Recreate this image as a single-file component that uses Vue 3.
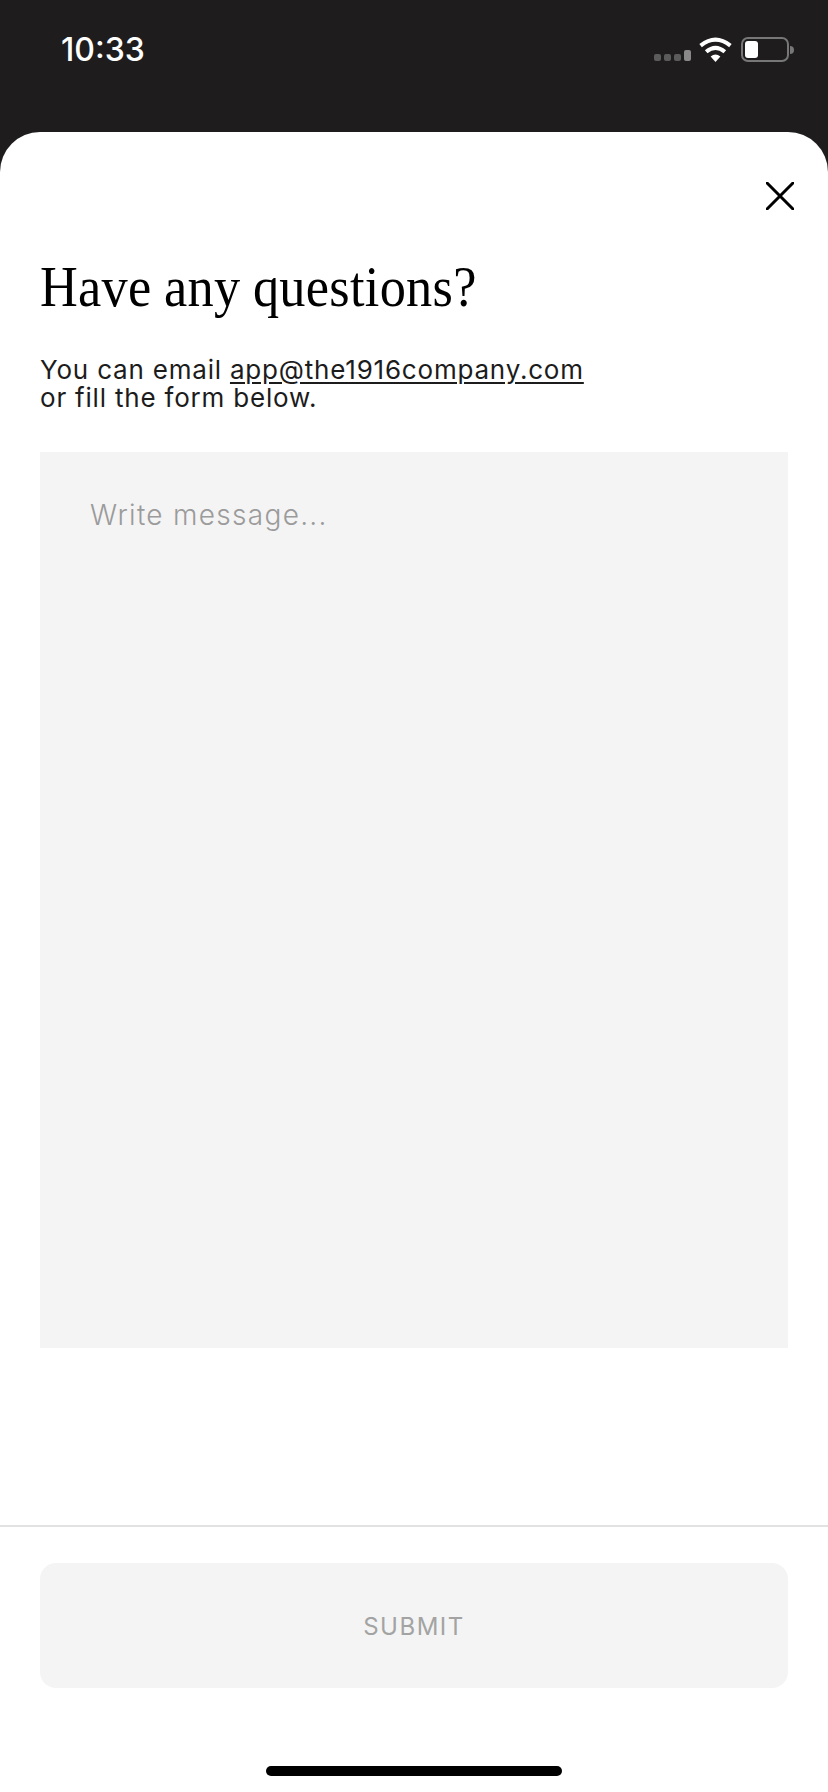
<script setup>
const email = 'app@the1916company.com'
</script>

<template>
  <div class="screen">
    <header class="status">
      <span class="time">10:33</span>
      <div class="status-icons">
        <div class="signal">
          <i></i><i></i><i></i><i class="tall"></i>
        </div>
        <svg class="wifi" width="33" height="25" viewBox="0 0 33 25">
          <path d="M16.5 25 L11.6 19.6 Q16.5 15.6 21.4 19.6 Z" fill="#fff" />
          <path d="M7.2 14.8 Q16.5 6.8 25.8 14.8" fill="none" stroke="#fff" stroke-width="4" />
          <path d="M1.6 8.6 Q16.5 -3.4 31.4 8.6" fill="none" stroke="#fff" stroke-width="4" />
        </svg>
        <div class="battery">
          <div class="battery-body"><div class="battery-fill"></div></div>
          <div class="battery-nub"></div>
        </div>
      </div>
    </header>

    <main class="sheet">
      <div class="close-row">
        <svg class="close" width="28" height="28" viewBox="0 0 28 28">
          <path d="M1 1 L27 27 M27 1 L1 27" stroke="#000" stroke-width="3" stroke-linecap="round" />
        </svg>
      </div>

      <div class="content">
        <h1 class="title">Have any questions?</h1>
        <p class="intro">
          You can email <a class="mail">{{ email }}</a><br />
          or fill the form below.
        </p>
        <div class="message">Write message...</div>
      </div>

      <footer class="actions">
        <button class="submit">SUBMIT</button>
        <div class="home-bar"></div>
      </footer>
    </main>
  </div>
</template>

<style>
html,
body {
  margin: 0;
  background: #1e1c1d;
}
</style>

<style scoped>
.screen {
  width: 828px;
  height: 1792px;
  display: flex;
  flex-direction: column;
  background: #1e1c1d;
  overflow: hidden;
}

.status {
  height: 132px;
  box-sizing: border-box;
  padding: 31px 34px 0 61px;
  display: flex;
  justify-content: space-between;
  align-items: flex-start;
}

.time {
  color: #fff;
  font-family: Inter, sans-serif;
  font-size: 32px;
  font-weight: 500;
  line-height: 38px;
  letter-spacing: 0;
}

.status-icons {
  display: flex;
  align-items: flex-start;
  padding-top: 6px;
}

.signal {
  display: flex;
  align-items: flex-end;
  gap: 3px;
  height: 24px;
  margin-right: 8px;
}

.signal i {
  width: 7px;
  height: 7px;
  border-radius: 2px;
  background: #5c5b5c;
}

.signal i.tall {
  height: 11px;
  background: #8a898a;
}

.wifi {
  margin-right: 9px;
}

.battery {
  display: flex;
  align-items: center;
}

.battery-body {
  width: 48px;
  height: 25px;
  box-sizing: border-box;
  border: 2px solid #777;
  border-radius: 7px;
  padding: 2px;
}

.battery-fill {
  width: 13px;
  height: 100%;
  background: #fff;
  border-radius: 3px;
}

.battery-nub {
  width: 4px;
  height: 8px;
  margin-left: 1px;
  background: #777;
  border-radius: 0 4px 4px 0;
}

.sheet {
  flex: 1;
  display: flex;
  flex-direction: column;
  background: #fff;
  border-radius: 40px 40px 0 0;
}

.close-row {
  display: flex;
  justify-content: flex-end;
  padding: 50px 34px 0 0;
}

.content {
  flex: 1;
  padding: 0 40px;
}

.title {
  margin: 45px 0 0;
  font-family: "Liberation Serif", serif;
  font-size: 56px;
  font-weight: 400;
  line-height: 64px;
  letter-spacing: 0.3px;
  word-spacing: -1px;
  white-space: nowrap;
  transform: scaleX(0.935);
  transform-origin: left center;
  color: #000;
}

.intro {
  margin: 37px 0 0;
  font-family: Inter, sans-serif;
  font-size: 26px;
  line-height: 28px;
  letter-spacing: 0.8px;
  color: #1c1c1c;
}

.mail {
  text-decoration: underline;
  text-underline-offset: 3px;
}

.message {
  margin-top: 40px;
  height: 896px;
  box-sizing: border-box;
  padding: 46px 50px;
  background: #f4f4f4;
  font-family: Inter, sans-serif;
  font-size: 28px;
  font-weight: 300;
  line-height: 34px;
  letter-spacing: 1.3px;
  color: #9b9b9b;
}

.actions {
  border-top: 2px solid #e2e2e2;
  padding: 36px 40px 16px;
  display: flex;
  flex-direction: column;
  align-items: center;
}

.submit {
  width: 100%;
  height: 125px;
  padding-top: 2px;
  border: 0;
  border-radius: 16px;
  background: #f4f4f4;
  font-family: Inter, sans-serif;
  font-size: 24px;
  letter-spacing: 1.5px;
  color: #a3a3a3;
}

.home-bar {
  margin-top: 78px;
  width: 296px;
  height: 10px;
  border-radius: 5px;
  background: #000;
}
</style>
